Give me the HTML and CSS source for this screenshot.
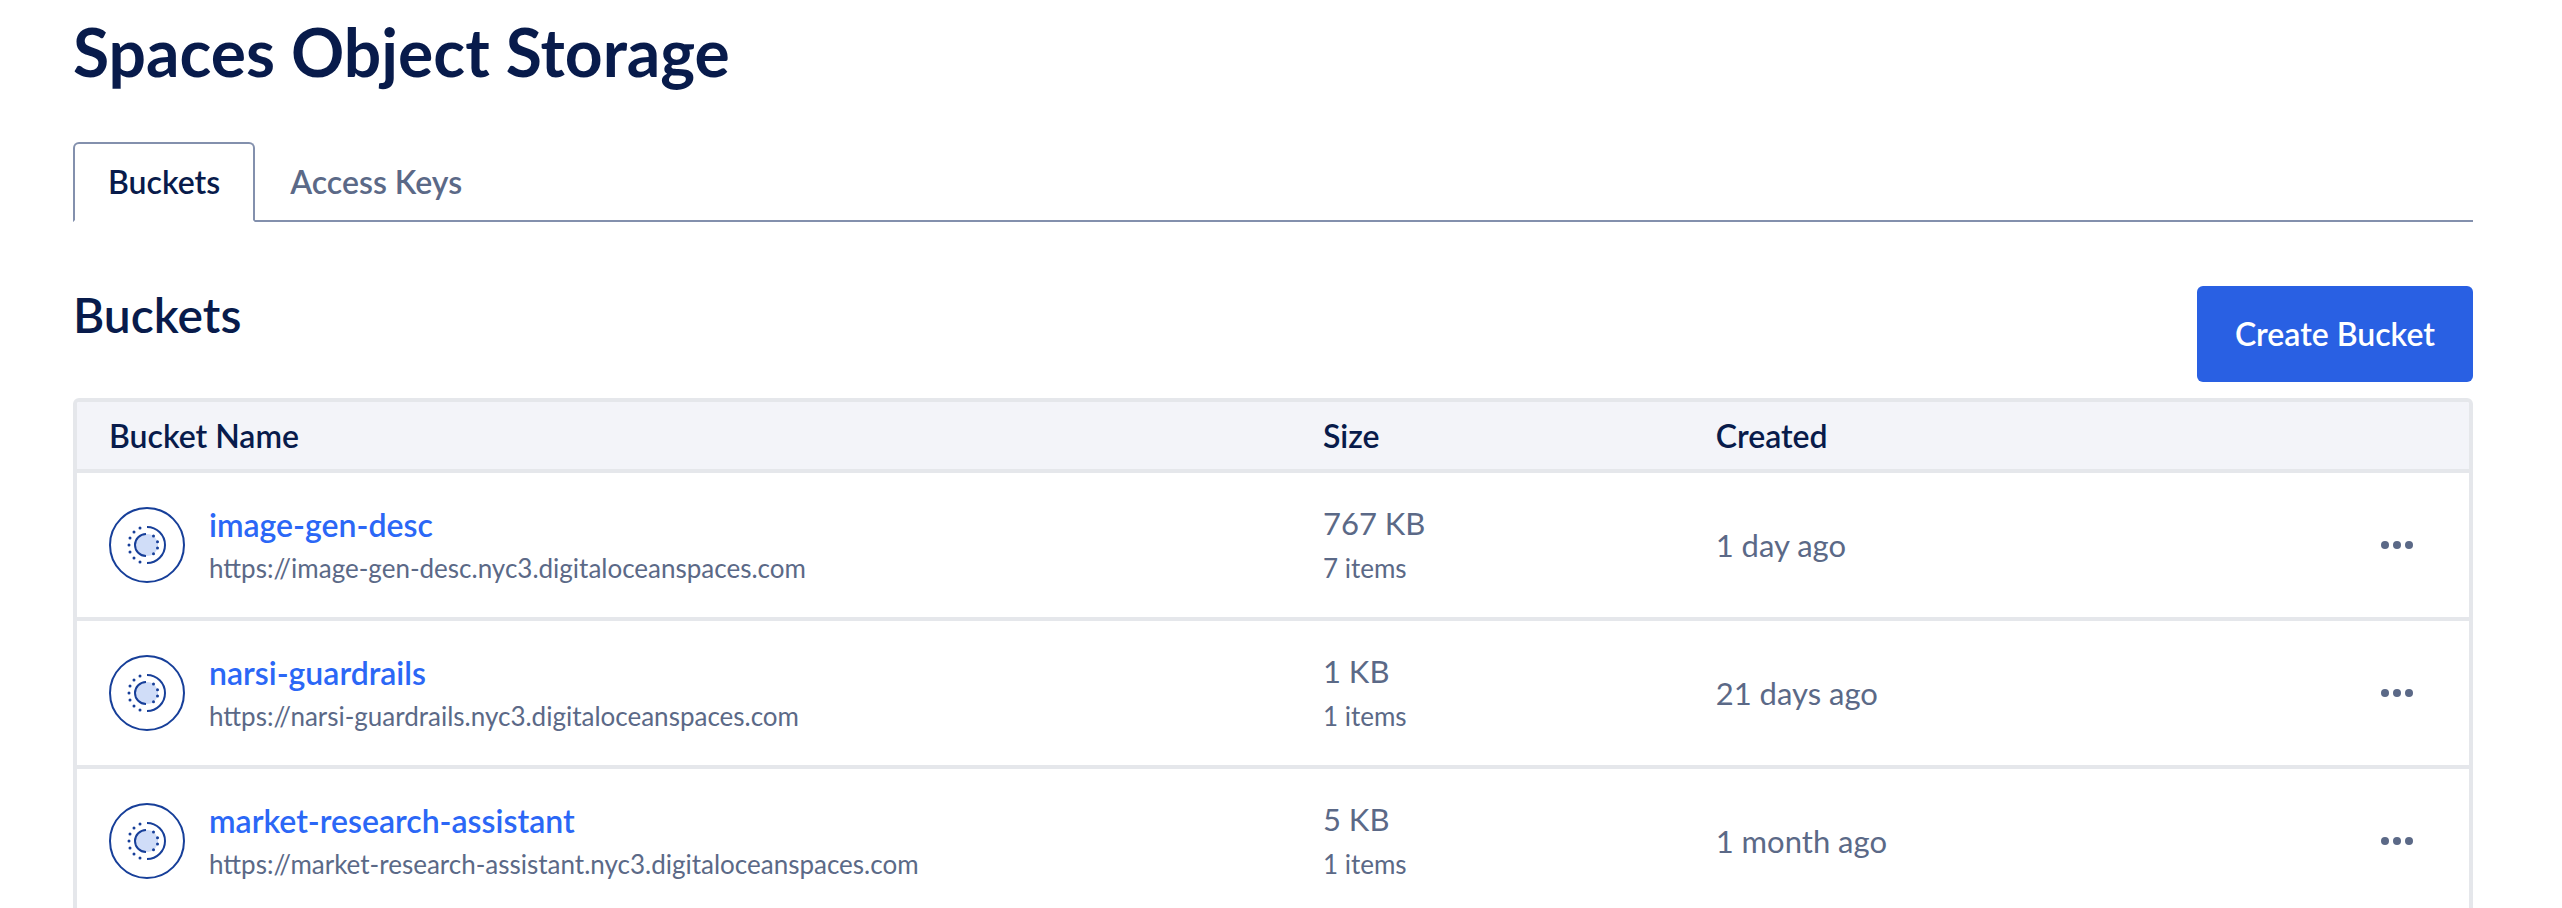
FILE: index.html
```html
<!DOCTYPE html>
<html lang="en">
<head>
<meta charset="utf-8">
<meta name="viewport" content="width=device-width, initial-scale=1">
<title>Spaces Object Storage</title>
<link rel="stylesheet" href="styles.css">
</head>
<body>
<svg class="sprite" aria-hidden="true">
  <symbol id="bucket" viewBox="-38 -38 76 76">
    <circle r="37" fill="#fff" stroke="#173f99" stroke-width="2"/>
    <circle r="11" fill="#d0ddf8"/>
    <path d="M-1-11a11 11 0 0 0 0 22M0-18a18 18 0 0 1 0 36" fill="none" stroke="#173f99" stroke-width="2"/>
    <g fill="#173f99">
      <circle cx="-7" cy="-17" r="1.5"/><circle cx="-13" cy="-13" r="1.5"/><circle cx="-17" cy="-7" r="1.5"/><circle cx="-18" cy="0" r="1.5"/>
      <circle cx="-17" cy="7" r="1.5"/><circle cx="-13" cy="13" r="1.5"/><circle cx="-7" cy="17" r="1.5"/>
      <circle cx="6.5" cy="-9" r="1.5"/><circle cx="10.5" cy="-3.2" r="1.5"/><circle cx="10.5" cy="3" r="1.5"/><circle cx="6.5" cy="8.7" r="1.5"/>
    </g>
  </symbol>
  <symbol id="more" viewBox="0 0 32 8">
    <circle cx="4" cy="4" r="4"/><circle cx="16" cy="4" r="4"/><circle cx="28" cy="4" r="4"/>
  </symbol>
</svg>
<main class="page">
  <h1 class="title">Spaces Object Storage</h1>
  <nav class="tabs" aria-label="Sections">
    <a class="tab tab-active" href="#buckets" aria-current="page">Buckets</a>
    <a class="tab" href="#keys">Access Keys</a>
  </nav>
  <section id="buckets">
    <header class="section-head">
      <h2 class="subtitle">Buckets</h2>
      <button class="create" type="button">Create Bucket</button>
    </header>
    <div class="panel">
      <table class="table">
        <thead>
          <tr><th class="col-name" scope="col">Bucket Name</th><th class="col-size" scope="col">Size</th><th scope="col">Created</th><td class="col-menu"></td></tr>
        </thead>
        <tbody>
          <tr>
            <td><div class="bucket"><svg class="bucket-icon" aria-hidden="true"><use href="#bucket"/></svg><div><a class="name" href="#image-gen-desc">image-gen-desc</a><span class="url">https://image-gen-desc.nyc3.digitaloceanspaces.com</span></div></div></td>
            <td><div class="size">767 KB</div><div class="items">7 items</div></td>
            <td>1 day ago</td>
            <td class="menu-cell"><button class="menu" type="button" aria-label="More actions for image-gen-desc"><svg class="menu-icon"><use href="#more"/></svg></button></td>
          </tr>
          <tr>
            <td><div class="bucket"><svg class="bucket-icon" aria-hidden="true"><use href="#bucket"/></svg><div><a class="name" href="#narsi-guardrails">narsi-guardrails</a><span class="url">https://narsi-guardrails.nyc3.digitaloceanspaces.com</span></div></div></td>
            <td><div class="size">1 KB</div><div class="items">1 items</div></td>
            <td>21 days ago</td>
            <td class="menu-cell"><button class="menu" type="button" aria-label="More actions for narsi-guardrails"><svg class="menu-icon"><use href="#more"/></svg></button></td>
          </tr>
          <tr>
            <td><div class="bucket"><svg class="bucket-icon" aria-hidden="true"><use href="#bucket"/></svg><div><a class="name" href="#market-research-assistant">market-research-assistant</a><span class="url">https://market-research-assistant.nyc3.digitaloceanspaces.com</span></div></div></td>
            <td><div class="size">5 KB</div><div class="items">1 items</div></td>
            <td>1 month ago</td>
            <td class="menu-cell"><button class="menu" type="button" aria-label="More actions for market-research-assistant"><svg class="menu-icon"><use href="#more"/></svg></button></td>
          </tr>
        </tbody>
      </table>
    </div>
  </section>
</main>
</body>
</html>
```
FILE: styles.css
```css
* { box-sizing: border-box; }
html { overflow: hidden; }
body {
  margin: 0;
  background: #fff;
  color: #5b6987;
  font: 400 32px/44px Lato, "Open Sans", sans-serif;
}
.sprite { display: none; }
.page { padding: 12px 89px 0 73px; }
.title {
  margin: 0 0 50px;
  color: #081b4b;
  font-size: 66px;
  line-height: 80px;
  font-weight: 700;
}
.tabs {
  display: flex;
  border-bottom: 2px solid #8390ad;
}
.tab {
  margin-bottom: -2px;
  padding: 16px 33px;
  border: 2px solid transparent;
  color: #5b6987;
  font-weight: 600;
  text-decoration: none;
}
.tab-active {
  border-color: #8390ad;
  border-bottom-color: #fff;
  border-radius: 6px 6px 0 0;
  background: #fff;
  color: #081b4b;
}
.section-head {
  display: flex;
  justify-content: space-between;
  align-items: flex-start;
  margin: 64px 0 16px;
}
.subtitle {
  margin: 0;
  color: #081b4b;
  font-size: 48px;
  line-height: 58px;
  font-weight: 600;
}
.create {
  height: 96px;
  padding: 0 38px;
  border: 0;
  border-radius: 6px;
  background: #2960e3;
  color: #fff;
  font: inherit;
  font-weight: 600;
}
.panel {
  overflow: hidden;
  border: 4px solid #e5e7eb;
  border-radius: 6px;
}
.table {
  width: 100%;
  table-layout: fixed;
  border-spacing: 0;
}
.table th,
.table td {
  height: 148px;
  padding: 0 32px;
  border-bottom: 4px solid #e5e7eb;
  font-size: 31px;
  text-align: left;
  vertical-align: middle;
}
.table thead th,
.table thead td {
  height: 71px;
  background: #f3f4f9;
  color: #081b4b;
  font-size: 32px;
  font-weight: 600;
}
.col-name { width: 50.75%; }
.col-size { width: 16.42%; }
.col-menu { width: 240px; }
.bucket {
  display: flex;
  align-items: center;
  gap: 24px;
}
.bucket-icon { width: 76px; height: 76px; flex: none; }
.name {
  display: block;
  color: #2b67f6;
  font-size: 32px;
  line-height: 46px;
  font-weight: 600;
  text-decoration: none;
}
.url { display: block; font-size: 26px; line-height: 40px; }
.size { line-height: 46px; }
.items { font-size: 26px; }
.table .menu-cell { text-align: right; }
.menu {
  display: inline-flex;
  align-items: center;
  justify-content: center;
  width: 80px;
  height: 64px;
  padding: 0;
  border: 0;
  background: none;
  vertical-align: middle;
}
.menu-icon { width: 32px; height: 8px; fill: #5b6987; }
```
